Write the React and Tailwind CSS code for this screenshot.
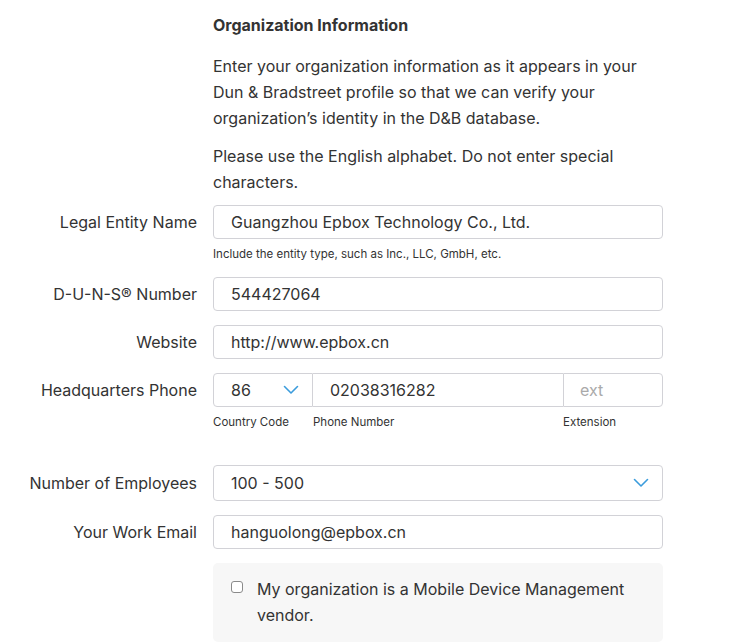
import React from "react";

const font = { fontFamily: "Inter, 'Liberation Sans', sans-serif" };

function Chevron() {
  return (
    <svg width="16" height="10" viewBox="0 0 16 10" fill="none">
      <path d="M1.5 1.5 L8 8 L14.5 1.5" stroke="#3b9cdc" strokeWidth="1.6" strokeLinecap="round" strokeLinejoin="round" />
    </svg>
  );
}

function Row({ label, children, className = "" }) {
  return (
    <div className={"flex items-start " + className}>
      <div className="w-[197px] shrink-0 h-[34px] flex items-center justify-end text-[16px] text-[#333]">{label}</div>
      <div className="ml-4 w-[450px]">{children}</div>
    </div>
  );
}

function Field({ value }) {
  return (
    <div className="h-[34px] border border-[#d2d2d7] rounded-[4px] px-[17px] flex items-center text-[16px] text-[#333] bg-white">
      {value}
    </div>
  );
}

export default function App() {
  return (
    <div className="min-h-screen bg-white antialiased" style={font}>
      <div className="pl-[213px] pt-[14px] w-[662px]">
        <h2 className="text-[16px] font-bold text-[#333] leading-[22px]">Organization Information</h2>
        <p className="mt-[17px] text-[16px] leading-[26px] text-[#333]">
          Enter your organization information as it appears in your Dun &amp; Bradstreet profile so that we can verify your organization’s identity in the D&amp;B database.
        </p>
        <p className="mt-[12px] text-[16px] leading-[26px] text-[#333]">
          Please use the English alphabet. Do not enter special characters.
        </p>
      </div>

      <div className="mt-[10px]">
        <Row label="Legal Entity Name">
          <Field value="Guangzhou Epbox Technology Co., Ltd." />
          <div className="mt-[8px] text-[11.5px] leading-[14px] text-[#333]">Include the entity type, such as Inc., LLC, GmbH, etc.</div>
        </Row>

        <Row label="D-U-N-S® Number" className="mt-[16px]">
          <Field value="544427064" />
        </Row>

        <Row label="Website" className="mt-[14px]">
          <Field value="http://www.epbox.cn" />
        </Row>

        <Row label="Headquarters Phone" className="mt-[14px]">
          <div className="flex">
            <div className="w-[100px] h-[34px] border border-[#d2d2d7] rounded-l-[4px] pl-[17px] pr-[13px] flex items-center justify-between text-[16px] text-[#333]">
              <span>86</span>
              <Chevron />
            </div>
            <div className="w-[250px] h-[34px] border-y border-[#d2d2d7] pl-[17px] flex items-center text-[16px] text-[#333]">02038316282</div>
            <div className="w-[100px] h-[34px] border border-[#d2d2d7] rounded-r-[4px] pl-[16px] flex items-center text-[16px] text-[#aaa]">ext</div>
          </div>
          <div className="flex mt-[8px] text-[11.5px] leading-[14px] text-[#333]">
            <span className="w-[100px]">Country Code</span>
            <span className="w-[250px]">Phone Number</span>
            <span className="w-[100px]">Extension</span>
          </div>
        </Row>

        <Row label={<span className="pt-[1px]">Number of Employees</span>} className="mt-[36px]">
          <div className="h-[36px] border border-[#d2d2d7] rounded-[4px] pl-[17px] pr-[13px] flex items-center justify-between text-[16px] text-[#333]">
            <span>100 - 500</span>
            <Chevron />
          </div>
        </Row>

        <Row label="Your Work Email" className="mt-[14px]">
          <Field value="hanguolong@epbox.cn" />
        </Row>

        <Row label="" className="mt-[14px]">
          <div className="bg-[#f7f7f7] rounded-[5px] pl-[18px] pr-4 pt-[13px] pb-[14px] flex items-start">
            <span className="mt-[5px] w-[12px] h-[12px] border border-[#8a8a8a] rounded-[3px] bg-white shrink-0" />
            <span className="ml-[14px] text-[16px] leading-[26px] text-[#333]">
              My organization is a Mobile Device Management vendor.
            </span>
          </div>
        </Row>
      </div>
    </div>
  );
}
